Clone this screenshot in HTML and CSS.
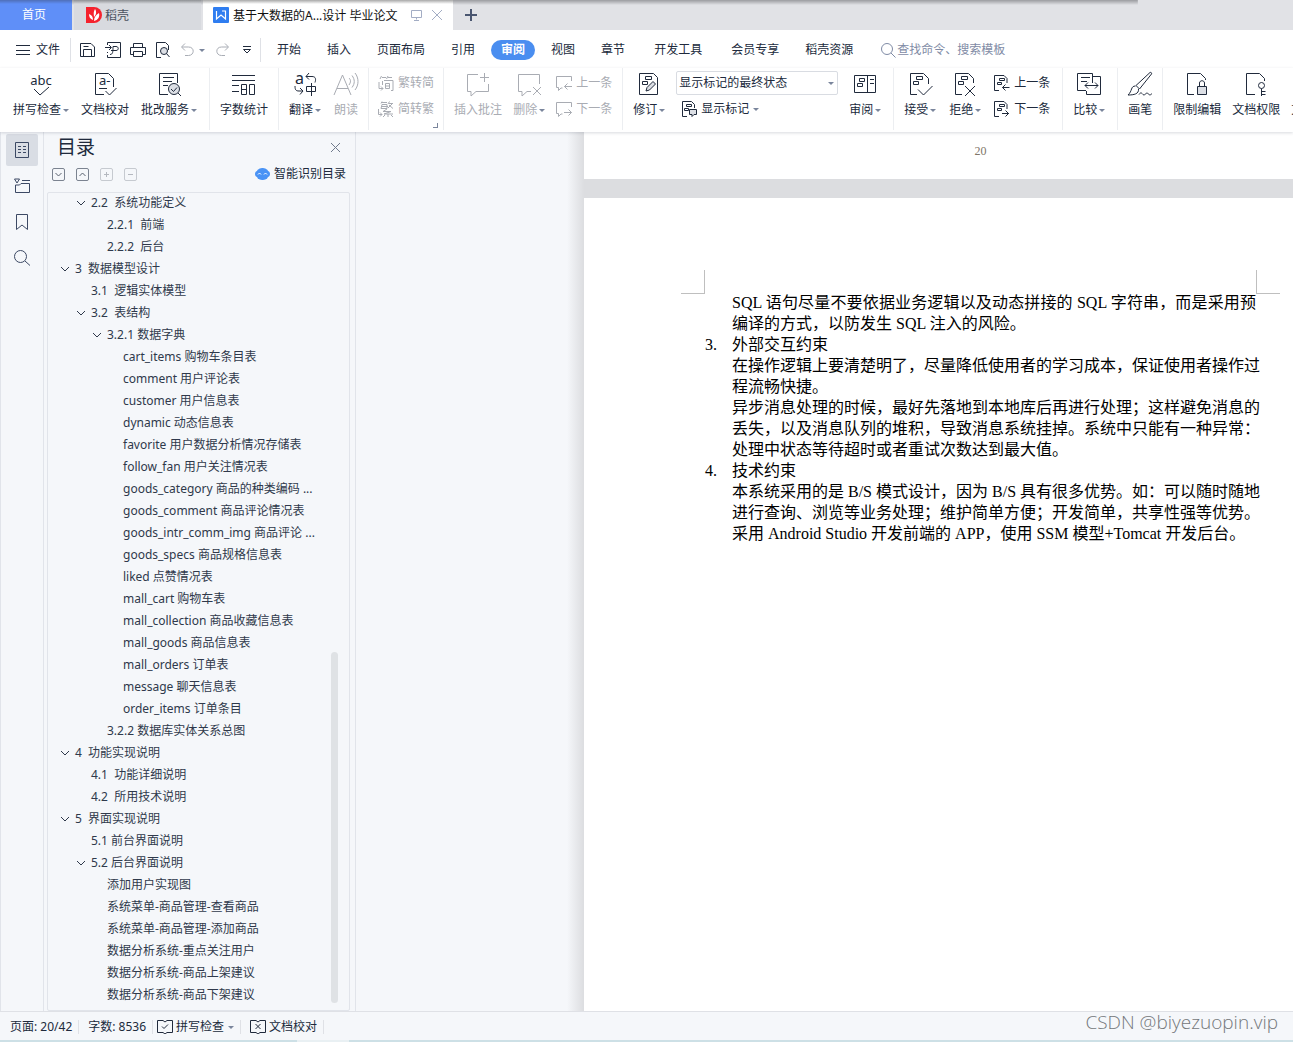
FILE: index.html
```html
<!DOCTYPE html>
<html lang="zh-CN">
<head>
<meta charset="utf-8">
<title>基于大数据的A...设计 毕业论文</title>
<link rel="stylesheet" href="styles.css">
</head>
<body>
<svg width="0" height="0" class="defs" aria-hidden="true">
  <symbol id="chev" viewBox="0 0 10 10"><path d="M1 3l4 4 4-4"/></symbol>
  <symbol id="notePrev" viewBox="0 0 16 16"><path d="M15.500 6V1.500H.500v11H2.500v3L5 13h1.500M16 11.500H8.500M11.500 8.500l-3 3 3 3"/></symbol>
  <symbol id="noteNext" viewBox="0 0 16 16"><path d="M15.500 6V1.500H.500v11H2.500v3L5 13h1.500M8 11.500h7.500M12.500 8.500l3 3-3 3"/></symbol>
  <symbol id="docPrev" viewBox="0 0 16 16"><path d="M5 15.500H.500V.500h9.500l3 3V8M5.500 3.500h5v2h-5zM3.500 7.500h4v2h-4zM15.500 12.500h-7M11.500 9.500l-3 3 3 3"/></symbol>
  <symbol id="docNext" viewBox="0 0 16 16"><path d="M5 15.500H.500V.500h9.500l3 3V8M5.500 3.500h5v2h-5zM3.500 7.500h4v2h-4zM8 12.500h7M11.500 9.500l3 3-3 3"/></symbol>
</svg>

<header class="tabs">
  <button class="tab tab-home">首页</button>
  <button class="tab tab-doc">
    <svg width="16" height="16" viewBox="0 0 16 16"><path d="M0 0h8a8 8 0 010 16H0z" fill="#f5222d"/><path d="M9 2c2 3 1 6-1 8 0-3-1-4 1-8zM3 7c3 1 4 3 4 6-3-1-4-3-4-6zM13 6c1 4-1 7-5 8 0-4 2-6 5-8z" fill="#fff"/></svg>
    <span>稻壳</span>
  </button>
  <div class="tab tab-active">
    <svg width="16" height="16" viewBox="0 0 16 16"><rect width="16" height="16" rx="1" fill="#2f7df0"/><path d="M3.500 4v8L8 8l4.500 4V4H9" fill="none" stroke="#fff" stroke-width="1.200"/></svg>
    <span class="tab-title">基于大数据的A...设计 毕业论文</span>
    <svg class="ln muted" width="11" height="12" viewBox="0 0 11 12"><path d="M.500 1.500h10v7H.500zM5.500 8.500v2M3 11.500h5"/></svg>
    <button class="plain" aria-label="关闭"><svg class="ln muted" width="12" height="12" viewBox="0 0 12 12"><path d="M1 1l10 10M11 1L1 11"/></svg></button>
  </div>
  <button class="plain new-tab" aria-label="新建"><svg width="12" height="12" viewBox="0 0 12 12"><path d="M6 0v12M0 6h12" stroke="#4a5670" stroke-width="2"/></svg></button>
</header>

<nav class="menu">
  <button class="plain file"><svg class="ln" width="14" height="11" viewBox="0 0 14 11"><path d="M0 .500h14M0 5.500h14M0 9.500h14"/></svg>文件</button>
  <i class="rule"></i>
  <div class="quick">
    <button class="plain" aria-label="保存"><svg class="ln" width="16" height="16" viewBox="0 0 16 16"><path d="M.500 14.500V1.500h10.500l3.500 3.500v9.500zM3.500 14.500v-7h8v7M3.500 4.500h5"/></svg></button>
    <button class="plain" aria-label="输出"><svg class="ln" width="16" height="16" viewBox="0 0 16 16"><path d="M2.500 3V.500h13v15h-13V13M0 5.500h6M4 3l2.500 2.500L4 8M5 12.500c3 0 3-3 3-8h3c3 0 3 4 0 4H6M2.500 10v1"/></svg></button>
    <button class="plain" aria-label="打印"><svg class="ln" width="16" height="16" viewBox="0 0 16 16"><path d="M3.500 5V1.500h9V5M3.500 12.500h-3v-7h15v7h-3M3.500 9.500h9v5h-9z"/></svg></button>
    <button class="plain" aria-label="打印预览"><svg class="ln" width="16" height="16" viewBox="0 0 16 16"><path d="M6 15.500H1.500V.500h9l3 3V8"/><circle cx="9" cy="9" r="3.500" fill="#dcdfe5"/><path d="M11.500 11.500l3 3.500"/></svg></button>
    <button class="plain dim undo" aria-label="撤销"><svg class="ln" width="16" height="16" viewBox="0 0 16 16"><path d="M5 1.500L1.500 5 5 8.500M2 5h6.500c6.500 0 6 8.500 0 8.500H5"/></svg><i class="caret"></i></button>
    <button class="plain dim" aria-label="恢复"><svg class="ln" width="16" height="16" viewBox="0 0 16 16"><path d="M11 1.500L14.500 5 11 8.500M14 5H7.500C1 5 1.500 13.500 7.500 13.500H11"/></svg></button>
    <button class="plain more" aria-label="更多"><svg class="ln" width="10" height="10" viewBox="0 0 10 10"><path d="M1 1.500h8M1.500 4.500L5 8l3.500-3.500z"/></svg></button>
  </div>
  <i class="rule"></i>
  <div class="menu-tabs">
    <button>开始</button><button>插入</button><button>页面布局</button><button>引用</button><button class="on">审阅</button><button>视图</button><button>章节</button><button class="wide">开发工具</button><button class="wide">会员专享</button><button>稻壳资源</button>
  </div>
  <label class="search"><svg class="ln" width="15" height="15" viewBox="0 0 15 15"><circle cx="6" cy="6" r="5.500"/><path d="M10 10l4.500 4.500"/></svg><input type="text" placeholder="查找命令、搜索模板" aria-label="查找命令"></label>
</nav>

<div class="ribbon">
  <div class="group g-first">
    <button class="big"><svg class="ln" width="28" height="26" viewBox="0 0 28 26"><text x="14" y="14" text-anchor="middle" class="glyph">abc</text><path d="M7 18l6 6 9-8"/></svg><span>拼写检查<i class="caret"></i></span></button>
    <button class="big"><svg class="ln" width="28" height="26" viewBox="0 0 28 26"><path d="M13 23.500H4.500v-21h13l5 5V16M8 17.500h8M14.500 20l4 4 7-7"/><text x="8" y="14" class="glyph">a-</text></svg><span>文档校对</span></button>
    <button class="big"><svg class="ln" width="28" height="26" viewBox="0 0 28 26"><path d="M13 23.500H4.500v-21h18V12M8 6.500h11M8 10.500h9M8 14.500h5"/><circle cx="19" cy="18" r="5.500" fill="#dcdfe5"/><path d="M16 18l2.500 2.500 3.500-4M23 22l3 3"/></svg><span>批改服务<i class="caret"></i></span></button>
  </div>
  <div class="group">
    <button class="big"><svg class="ln" width="28" height="26" viewBox="0 0 28 26"><path d="M2 4.500h23M2 9.500h23M2 14.500h7M2 20.500h7M11.500 13.500h5v10h-5zM11.500 18.500h5M19.500 13.500h5v10h-5z"/></svg><span>字数统计</span></button>
  </div>
  <div class="group g-read">
    <button class="big"><svg class="ln" width="28" height="26" viewBox="0 0 28 26"><text x="4" y="13" class="glyph large">a</text><path d="M18 2l-3 3.500 3 3M15 5.500h6c4 0 4 3 3 6M4 15c0 4 1 5 4 5h4M9 17l3 3-3 3.500M15.500 15.500h9v5h-9zM20.500 12v13"/></svg><span>翻译<i class="caret"></i></span></button>
    <button class="big" disabled><svg class="ln" width="28" height="26" viewBox="0 0 28 26"><path d="M2 24l8.500-20L19 24M5 17.500h11M17 7c2 2 2 4 0 7M20 4.500c3 4 3 8 0 12M23 2c4 5 4 12 0 17"/></svg><span>朗读</span></button>
  </div>
  <div class="group g-conv">
    <div class="rows">
      <button class="row" disabled><svg class="ln" width="16" height="16" viewBox="0 0 16 16"><path d="M3.500 1L2 4M4 2.500h4M10 1L8.500 4M10 2.500h4M4.500 6v4M6 5.500h9v10h-2M7.500 8.500h4v5h-4zM7.500 11h4M1 7v6.500h4M3 11.500l2 2-2 2"/></svg>繁转简</button>
      <button class="row" disabled><svg class="ln" width="16" height="16" viewBox="0 0 16 16"><path d="M4 .500L3 2.500M4 1.500h5M4 3.500h5v4H3zM3 5.500h7M11.500.500L10 3M11 2.500h4M10 7l4-4M11 4l4 3.500M9 8L5 10.500h8L6 13h9M10 13v3M7 14l-2 2M13 14l2 2M.500 8v5.500H4M2 11.500l2 2-2 2"/></svg>简转繁</button>
    </div>
    <i class="launcher"></i>
  </div>
  <div class="group g-note">
    <button class="big" disabled><svg class="ln" width="28" height="26" viewBox="0 0 28 26"><path d="M14 3.500H3.500v17H7V25l5-4.500h12.500V13M20.500 2v9M16 6.500h9"/></svg><span>插入批注</span></button>
    <button class="big" disabled><svg class="ln" width="28" height="26" viewBox="0 0 28 26"><path d="M24.500 13V3.500H3.500v17H7V25l5-4.500h4M18 16l8 8M26 16l-8 8"/></svg><span>删除<i class="caret"></i></span></button>
    <div class="rows">
      <button class="row" disabled><svg class="ln" width="16" height="16"><use href="#notePrev"/></svg>上一条</button>
      <button class="row" disabled><svg class="ln" width="16" height="16"><use href="#noteNext"/></svg>下一条</button>
    </div>
  </div>
  <div class="group g-track">
    <button class="big"><svg class="ln" width="28" height="26" viewBox="0 0 28 26"><path d="M4.500 2.500h14l4 4v17h-18zM10.500 5.500h6v3h-6zM7.500 10.500h5v3h-5z"/><path d="M11 20l1-3.500 6-6 2.500 2.500-6 6z" fill="#dcdfe5"/></svg><span>修订<i class="caret"></i></span></button>
    <div class="rows">
      <span class="select"><select aria-label="显示状态"><option>显示标记的最终状态</option></select><i class="caret"></i></span>
      <button class="row show"><svg class="ln" width="16" height="16" viewBox="0 0 16 16"><path d="M6 15.500H1.500V.500h9l3 3V7M5.500 3.500h5v2h-5zM3.500 7.500h4v2h-4z"/><path d="M8.500 8.500h7v5H13l-2 2v-2H8.500z" fill="#dcdfe5"/></svg>显示标记<i class="caret"></i></button>
    </div>
    <button class="big"><svg class="ln" width="28" height="26" viewBox="0 0 28 26"><path d="M3.500 4.500h21v17h-21zM16.500 4.500v17M8.500 7.500h5v3h-5zM6.500 12.500h5v3h-5zM19 8.500h4M19 12.500h4"/></svg><span>审阅<i class="caret"></i></span></button>
  </div>
  <div class="group g-accept">
    <button class="big"><svg class="ln" width="28" height="26" viewBox="0 0 28 26"><path d="M11 23.500H4.500v-21h13l5 5V13M10.500 5.500h6v3h-6zM7.500 10.500h5v3h-5zM12 18.500l5.500 5.500 9-9"/></svg><span>接受<i class="caret"></i></span></button>
    <button class="big"><svg class="ln" width="28" height="26" viewBox="0 0 28 26"><path d="M11 23.500H4.500v-21h13l5 5V12M10.500 5.500h6v3h-6zM7.500 10.500h5v3h-5zM14 15l10 10M24 15L14 25"/></svg><span>拒绝<i class="caret"></i></span></button>
    <div class="rows">
      <button class="row"><svg class="ln" width="16" height="16"><use href="#docPrev"/></svg>上一条</button>
      <button class="row"><svg class="ln" width="16" height="16"><use href="#docNext"/></svg>下一条</button>
    </div>
  </div>
  <div class="group g-compare">
    <button class="big"><svg class="ln" width="28" height="26" viewBox="0 0 28 26"><path d="M11 19.500H2.500v-17h15V12M6 6.500h9M6 10.500h6M17.500 5.500h8v18h-14V20M10 14.500h13M13 11.500l-3 3 3 3M20 11.500l3 3-3 3"/></svg><span>比较<i class="caret"></i></span></button>
  </div>
  <div class="group">
    <button class="big"><svg class="ln" width="28" height="26" viewBox="0 0 28 26"><path d="M24 1.500L10 14.500l3.500 3.500L25.500 3c.500-1-.500-2-1.500-1.500zM9.500 15c-5 0-3 5-7.500 9 6 0 11-1 10.500-6M13 23.500c2-3 3-1 4 0s2 0 3-1 2 0 3 1 2 0 3-1"/></svg><span>画笔</span></button>
  </div>
  <div class="group g-note">
    <button class="big"><svg class="ln" width="28" height="26" viewBox="0 0 28 26"><path d="M11 23.500H4.500v-21h13l5 5V9"/><path d="M14.500 15.500h9v8h-9z" fill="#dcdfe5"/><path d="M16.500 15v-3c0-3 5-3 5 0v3"/></svg><span>限制编辑</span></button>
    <button class="big"><svg class="ln" width="28" height="26" viewBox="0 0 28 26"><path d="M13 23.500H4.500v-21h13l5 5V10"/><circle cx="19.500" cy="14.500" r="3"/><path d="M19.500 17.500V25M19.500 20.500h4M19.500 23.500h4"/></svg><span>文档权限</span></button>
    <button class="big"><svg width="28" height="26"></svg><span>文档</span></button>
  </div>
</div>

<main class="work">
  <nav class="rail">
    <button class="on" aria-label="目录"><svg class="ln" width="16" height="18" viewBox="0 0 16 18"><path d="M1.500 1.500h13v15h-13zM4 5.500h3M9 5.500h3M4 8.500h3M9 8.500h3M4 11.500h3M9 11.500h3"/></svg></button>
    <button aria-label="章节"><svg class="ln" width="18" height="18" viewBox="0 0 18 18"><path d="M1.500 2h5L4 6zM2.500 8v7.500h14v-9H8L6.500 8h-4M9 3.500h8"/></svg></button>
    <button aria-label="书签"><svg class="ln" width="16" height="18" viewBox="0 0 16 18"><path d="M2.500 1.500h11v15L8 12l-5.500 4.500z"/></svg></button>
    <button aria-label="查找"><svg class="ln" width="18" height="18" viewBox="0 0 18 18"><circle cx="7.500" cy="7.500" r="6"/><path d="M12 12l5 4.500"/></svg></button>
  </nav>
  <aside class="outline">
    <div class="outline-head"><h2>目录</h2><button class="plain" aria-label="关闭"><svg class="ln muted-dark" width="11" height="11" viewBox="0 0 11 11"><path d="M1 1l9 9M10 1l-9 9"/></svg></button></div>
    <div class="outline-tools">
      <button class="sq" aria-label="展开"><svg class="ln" width="9" height="9" viewBox="0 0 9 9"><path d="M1.500 3l3 3 3-3"/></svg></button>
      <button class="sq" aria-label="折叠"><svg class="ln" width="9" height="9" viewBox="0 0 9 9"><path d="M1.500 6l3-3 3 3"/></svg></button>
      <button class="sq faint" aria-label="增加"><svg class="ln" width="9" height="9" viewBox="0 0 9 9"><path d="M2 4.500h5M4.500 2v5"/></svg></button>
      <button class="sq faint" aria-label="减少"><svg class="ln" width="9" height="9" viewBox="0 0 9 9"><path d="M2 4.500h5"/></svg></button>
      <button class="plain smart"><svg width="15" height="12" viewBox="0 0 15 12"><rect x="1" width="13" height="12" rx="6" fill="#4a93f5"/><rect y="3" width="15" height="6" rx="3" fill="#4a93f5"/><path d="M3 6.500l1.500-1.500L6 6.500M9 6.500L10.500 5 12 6.500" fill="none" stroke="#fff"/></svg>智能识别目录</button>
    </div>
    <div class="tree-box">
      <ul class="tree">
        <li class="l1"><svg class="ln"><use href="#chev"/></svg>2.2  系统功能定义</li>
        <li class="l2">2.2.1  前端</li>
        <li class="l2">2.2.2  后台</li>
        <li class="l0"><svg class="ln"><use href="#chev"/></svg>3  数据模型设计</li>
        <li class="l1">3.1  逻辑实体模型</li>
        <li class="l1"><svg class="ln"><use href="#chev"/></svg>3.2  表结构</li>
        <li class="l2"><svg class="ln"><use href="#chev"/></svg>3.2.1 数据字典</li>
        <li class="l3">cart_items 购物车条目表</li>
        <li class="l3">comment 用户评论表</li>
        <li class="l3">customer 用户信息表</li>
        <li class="l3">dynamic 动态信息表</li>
        <li class="l3">favorite 用户数据分析情况存储表</li>
        <li class="l3">follow_fan 用户关注情况表</li>
        <li class="l3">goods_category 商品的种类编码 ...</li>
        <li class="l3">goods_comment 商品评论情况表</li>
        <li class="l3">goods_intr_comm_img 商品评论 ...</li>
        <li class="l3">goods_specs 商品规格信息表</li>
        <li class="l3">liked 点赞情况表</li>
        <li class="l3">mall_cart 购物车表</li>
        <li class="l3">mall_collection 商品收藏信息表</li>
        <li class="l3">mall_goods 商品信息表</li>
        <li class="l3">mall_orders 订单表</li>
        <li class="l3">message 聊天信息表</li>
        <li class="l3">order_items 订单条目</li>
        <li class="l2">3.2.2 数据库实体关系总图</li>
        <li class="l0"><svg class="ln"><use href="#chev"/></svg>4  功能实现说明</li>
        <li class="l1">4.1  功能详细说明</li>
        <li class="l1">4.2  所用技术说明</li>
        <li class="l0"><svg class="ln"><use href="#chev"/></svg>5  界面实现说明</li>
        <li class="l1">5.1 前台界面说明</li>
        <li class="l1"><svg class="ln"><use href="#chev"/></svg>5.2 后台界面说明</li>
        <li class="l2">添加用户实现图</li>
        <li class="l2">系统菜单-商品管理-查看商品</li>
        <li class="l2">系统菜单-商品管理-添加商品</li>
        <li class="l2">数据分析系统-重点关注用户</li>
        <li class="l2">数据分析系统-商品上架建议</li>
        <li class="l2">数据分析系统-商品下架建议</li>
      </ul>
      <i class="thumb"></i>
    </div>
  </aside>
  <section class="canvas">
    <div class="pages">
      <div class="page page-end">20</div>
      <article class="page page-body">
        <div class="marks"><i></i><i></i></div>
        <div class="clause"><div>
          <p class="full">SQL 语句尽量不要依据业务逻辑以及动态拼接的 SQL 字符串，而是采用预</p>
          <p>编译的方式，以防发生 SQL 注入的风险。</p>
        </div></div>
        <div class="clause"><span>3.</span><div>
          <p>外部交互约束</p>
          <p class="full">在操作逻辑上要清楚明了，尽量降低使用者的学习成本，保证使用者操作过</p>
          <p>程流畅快捷。</p>
          <p class="full">异步消息处理的时候，最好先落地到本地库后再进行处理；这样避免消息的</p>
          <p class="full">丢失，以及消息队列的堆积，导致消息系统挂掉。系统中只能有一种异常：</p>
          <p>处理中状态等待超时或者重试次数达到最大值。</p>
        </div></div>
        <div class="clause"><span>4.</span><div>
          <p>技术约束</p>
          <p class="full">本系统采用的是 B/S 模式设计，因为 B/S 具有很多优势。如：可以随时随地</p>
          <p class="full">进行查询、浏览等业务处理；维护简单方便；开发简单，共享性强等优势。</p>
          <p>采用 Android Studio 开发前端的 APP，使用 SSM 模型+Tomcat 开发后台。</p>
        </div></div>
      </article>
    </div>
  </section>
</main>

<footer class="status">
  <span>页面: 20/42</span><i class="rule"></i>
  <span>字数: 8536</span><i class="rule tight"></i>
  <button class="plain"><svg class="ln" width="16" height="14" viewBox="0 0 16 14"><path d="M6 .500H.500v12H6L8 14l2-1.500h5.500V.500H10L8 2zM5 6.500l2 2 4-4"/></svg>拼写检查<i class="caret"></i></button><i class="rule"></i>
  <button class="plain"><svg class="ln" width="16" height="14" viewBox="0 0 16 14"><path d="M6 .500H.500v12H6L8 14l2-1.500h5.500V.500H10L8 2zM5.500 4l5 5M10.500 4l-5 5"/></svg>文档校对</button><i class="rule"></i>
  <span class="credit">CSDN @biyezuopin.vip</span>
</footer>
<div class="strip"></div>
</body>
</html>
```
FILE: styles.css
```css
* { box-sizing: border-box; }
body {
  margin: 0;
  height: 100vh;
  display: flex;
  flex-direction: column;
  overflow: hidden;
  background: #f5f7fa;
  color: #202a3c;
  font: 12px/16px "Noto Sans", "Noto Sans CJK SC", sans-serif;
}
button, input, select { font: inherit; color: inherit; }
button { border: 0; padding: 0; background: none; white-space: nowrap; }
svg { flex: none; display: block; }
.defs { position: absolute; }
.ln { fill: none; stroke: currentColor; stroke-width: 1; }
.ln .glyph { font-size: 13px; fill: currentColor; stroke: none; }
.ln .large { font-size: 16px; }
.plain { display: flex; align-items: center; }
.muted { color: #a3adc4; }
.muted-dark { color: #707a8c; }
.dim { color: #a9adb5; }
.caret {
  display: inline-block;
  flex: none;
  border: 3px solid transparent;
  border-top-color: #7a859c;
  border-bottom: 0;
}
.rule { width: 1px; background: #dfe1e6; flex: none; }

/* window tabs */
.tabs {
  display: flex;
  flex: none;
  height: 30px;
  background: linear-gradient(#9b9ca0, rgba(225, 226, 230, 0) 5px) no-repeat 0 0 / 88% 100%, #e1e2e6;
}
.tab { display: flex; align-items: center; }
.tab-home { width: 72px; padding-left: 22px; color: #fff; background: linear-gradient(#4f6fb8, #5f8ff8 4px); }
.tab-doc { width: 127px; margin-left: 2px; padding-left: 12px; gap: 3px; color: #4b5260; background: linear-gradient(#8e9094, #d8dadf 4px); }
.tab-active { width: 250px; margin-left: 2px; padding: 0 10px; gap: 4px; color: #111; background: linear-gradient(#a8a8a8, #fff 4px); }
.tab span { padding-top: 1px; }
.tab-title { flex: 1; white-space: nowrap; }
.tab-active .plain { margin-left: 5px; }
.new-tab { margin-left: 12px; }

/* menu row */
.menu { display: flex; flex: none; align-items: center; height: 38px; padding: 2px 0 0 16px; background: #fff; }
.file { gap: 6px; }
.menu .rule { height: 24px; margin-left: 10px; }
.quick { display: flex; align-items: center; gap: 9px; margin-left: 9px; }
.undo { gap: 3px; }
.more { margin-left: 3px; }
.menu .quick + .rule { margin-left: 8px; }
.menu-tabs { display: flex; gap: 6px; margin-left: 6px; }
.menu-tabs button { height: 20px; padding: 0 10px; border-radius: 10px; }
.menu-tabs .wide { margin-left: 3px; }
.menu-tabs .on { color: #fff; background: #4a8ef0; font-weight: 700; }
.search { display: flex; align-items: center; gap: 1px; margin-left: 18px; color: #7f8ba5; }
.search input { width: 160px; padding: 0; border: 0; outline: 0; background: none; }
.search input::placeholder { color: #7f8ba5; }

/* ribbon */
.ribbon {
  position: relative;
  z-index: 2;
  display: flex;
  flex: none;
  height: 64px;
  overflow-x: clip;
  background: #fff;
  box-shadow: 0 1px 3px rgba(40, 50, 70, .18);
}
.group { position: relative; display: flex; flex: none; align-items: flex-start; height: 62px; padding: 3px 10px 0; border-right: 1px solid #eceef1; }
.group:last-child { border-right: 0; }
.g-first { padding: 3px 12px 0 13px; gap: 12px; }
.g-read { gap: 13px; }
.g-conv { padding: 3px 9px 0; }
.g-note { gap: 11px; }
.g-track { padding-right: 12px; gap: 11px; }
.g-accept { padding-right: 12px; gap: 13px; }
.g-compare { padding-right: 12px; }
.big { display: flex; flex-direction: column; align-items: center; gap: 5px; }
.big svg { margin: 0 -2px; }
.big span { display: flex; align-items: center; gap: 2px; }
button:disabled { color: #a9acb3; }
.rows { display: flex; flex-direction: column; gap: 2px; }
.row { display: flex; align-items: center; gap: 4px; height: 24px; }
.launcher { position: absolute; right: 5px; bottom: 2px; width: 5px; height: 5px; border: solid #7a859c; border-width: 0 1px 1px 0; }
.select { position: relative; display: flex; }
.select select { appearance: none; width: 162px; height: 24px; padding: 0 2px; border: 1px solid #d9dce2; border-radius: 2px; background: #fff; }
.select .caret { position: absolute; right: 4px; top: 11px; }
.show { padding-left: 5px; }

/* workspace */
.work { display: flex; flex: 1; min-height: 0; }
.rail { display: flex; flex: none; flex-direction: column; align-items: center; gap: 4px; width: 44px; padding-top: 2px; border: solid #e1e4ea; border-width: 0 1px; color: #3c4964; }
.rail button { display: grid; place-items: center; width: 32px; height: 32px; border-radius: 2px; }
.rail .on { background: #d9dde4; }
.outline { display: flex; flex: none; flex-direction: column; width: 312px; padding: 0 5px 0 3px; border-right: 1px solid #e1e4ea; }
.outline-head { display: flex; justify-content: space-between; align-items: center; height: 30px; padding: 0 9px 0 10px; }
.outline-head h2 { margin: 0; font-size: 19px; line-height: 24px; font-weight: 400; }
.outline-tools { display: flex; align-items: center; gap: 11px; height: 24px; padding: 0 4px 0 5px; }
.sq { display: grid; place-items: center; width: 13px; height: 13px; border: 1px solid #7b8390; border-radius: 2px; color: #59616f; }
.sq.faint { border-color: #c6cad0; color: #b4b8bf; }
.smart { gap: 4px; margin-left: auto; }
.tree-box { position: relative; flex: 1; min-height: 0; margin-top: 6px; overflow: hidden; border: 1px solid #e1e4ea; border-radius: 2px; }
.tree { margin: -1px 0 0; padding: 0; list-style: none; }
.tree li { display: flex; align-items: center; height: 22px; white-space: pre; color: #2f394b; }
.tree svg { width: 10px; height: 10px; margin: 0 5px 0 -15px; }
.l0 { padding-left: 27px; }
.l1 { padding-left: 43px; }
.l2 { padding-left: 59px; }
.l3 { padding-left: 75px; }
.thumb { position: absolute; right: 11px; bottom: 7px; width: 7px; height: 43%; border-radius: 4px; background: #dfe2e5; }

/* document */
.canvas { flex: 1; min-width: 0; overflow: hidden; padding-left: 211px; }
.pages { display: flex; flex-direction: column; gap: 19px; width: 810px; height: 100%; padding-left: 17px; background: linear-gradient(90deg, #f5f7fa, #dcdde0 17px); }
.page { background: #fff; color: #000; font-family: "Liberation Serif", "Noto Sans CJK SC", serif; }
.page-end { height: 47px; padding-top: 11px; text-align: center; color: #807568; }
.page-body { flex: 1; padding: 72px 97px 0; font-size: 16px; line-height: 21px; }
.marks { display: flex; justify-content: space-between; height: 24px; margin-bottom: -2px; }
.marks i { width: 24px; border: solid #bfbfbf; border-width: 0 1px 1px 0; }
.marks i:last-child { border-width: 0 0 1px 1px; }
.clause { display: flex; margin: 0 24px; }
.clause span { width: 27px; margin-right: -27px; }
.clause div { flex: 1; min-width: 0; padding-left: 27px; }
.clause p { margin: 0; white-space: nowrap; }
.clause .full { text-align-last: justify; }

/* status bar */
.status { display: flex; flex: none; align-items: center; height: 29px; padding: 2px 15px 0 10px; border-top: 1px solid #dfe1e6; white-space: nowrap; }
.status .rule { height: 14px; margin: 0 9px 0 6px; }
.status .tight { margin-right: 4px; }
.status .plain { gap: 3px; }
.status .caret { margin-left: 1px; }
.credit { align-self: flex-start; margin-left: auto; font: 300 19px/16px "Open Sans", sans-serif; color: #74777b; }
.strip { flex: none; height: 2px; background: linear-gradient(90deg, #cde0e6 23%, #e9f0f3 23%, #e9f0f3 27%, #cde0e6 27%); }
```
